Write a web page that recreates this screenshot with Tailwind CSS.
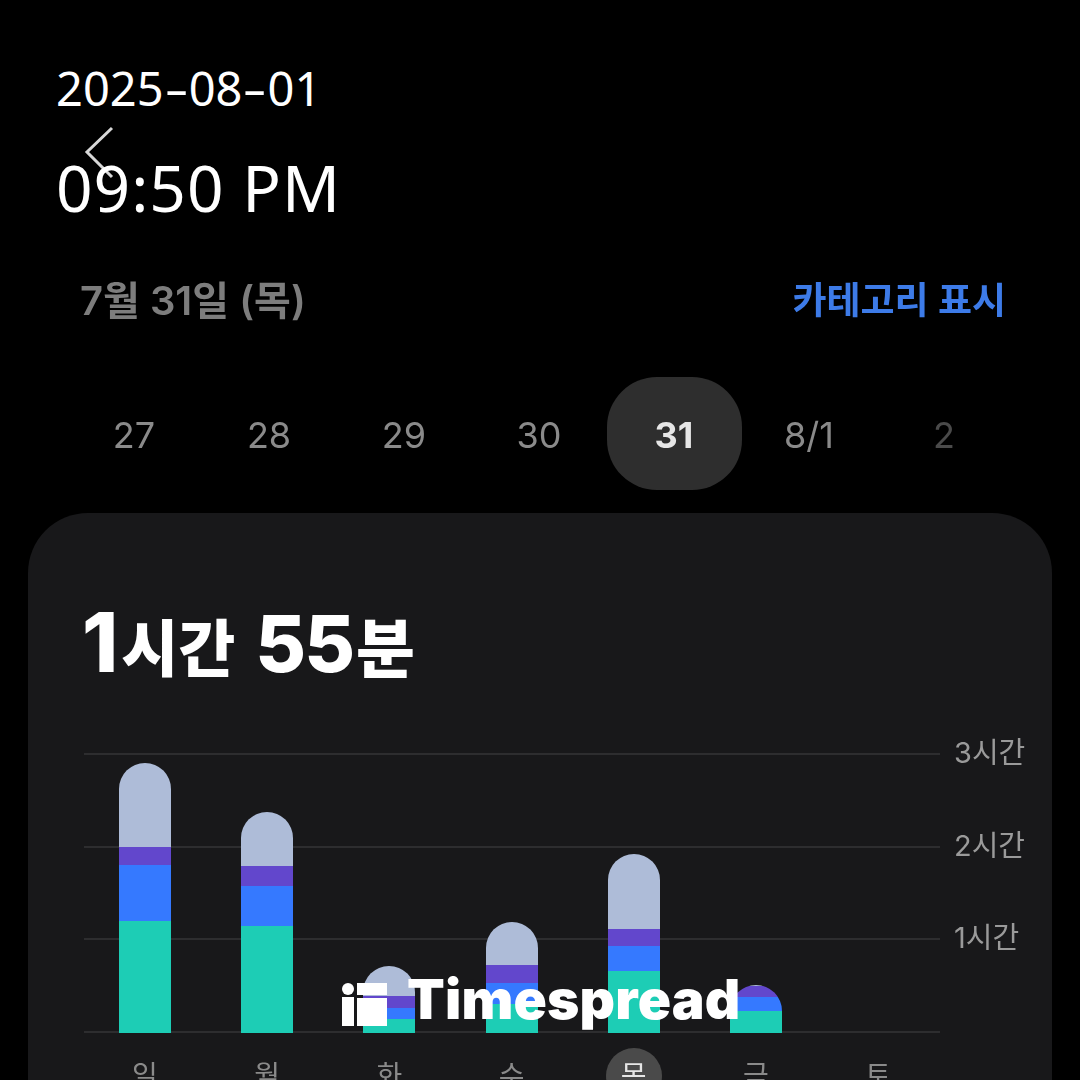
<!DOCTYPE html>
<html lang="ko">
<head>
  <meta charset="UTF-8">
  <meta name="viewport" content="width=device-width, initial-scale=1.0">
  <title>Timespread</title>
  <script src="https://cdn.jsdelivr.net/npm/@tailwindcss/browser@4"></script>
</head>
<body class="bg-black">
  <div class="relative w-[1080px] h-[1080px] overflow-hidden bg-black font-['Inter','Noto_Sans_CJK_KR',sans-serif]">

    <!-- App screenshot -->
    <div class="flex flex-col h-full blur-[0.6px]">
      <!-- Back button -->
      <div class="h-[260px] pl-[84px] pt-[126px] shrink-0">
        <svg class="w-[30px] h-[54px]" viewBox="0 0 30 54" fill="none" stroke="#d8d8d8" stroke-width="3">
          <path d="M28 2 L3 26 L28 51"/>
        </svg>
      </div>

      <!-- Date + category toggle -->
      <div class="flex items-center justify-between pl-[80px] pr-[74px] pt-[2px] h-[80px] shrink-0">
        <span class="text-[40px] font-semibold text-[#7d7d7d]">7월 31일 (목)</span>
        <span class="text-[37px] font-semibold text-[#3d7be8]">카테고리 표시</span>
      </div>

      <!-- Day picker -->
      <div class="flex pl-[66.5px] mt-[37px] h-[113px] shrink-0 text-[36px] text-[#8a8a8a]">
        <div class="w-[135px] flex items-center justify-center pt-[2px]">27</div>
        <div class="w-[135px] flex items-center justify-center pt-[2px]">28</div>
        <div class="w-[135px] flex items-center justify-center pt-[2px]">29</div>
        <div class="w-[135px] flex items-center justify-center pt-[2px]">30</div>
        <div class="w-[135px] flex items-center justify-center pt-[2px] rounded-[50px] bg-[#2e2e2e] text-[#e6e6e6] font-bold">31</div>
        <div class="w-[135px] flex items-center justify-center pt-[2px]">8/1</div>
        <div class="w-[135px] flex items-center justify-center pt-[2px] text-[#4a4a4a]">2</div>
      </div>

      <!-- Card -->
      <div class="mx-[28px] mt-[23px] flex-1 rounded-t-[60px] bg-[#18181a] pl-[54px]">
        <div class="flex items-baseline pt-[83px] h-[240px] text-white font-extrabold">
          <span class="text-[82px] leading-[94px] mr-[3px]">1</span>
          <span class="text-[62px] leading-[94px] mr-[20px]">시간</span>
          <span class="text-[78px] leading-[94px] mr-[3px] tracking-[-2px]">55</span>
          <span class="text-[64px] leading-[94px]">분</span>
        </div>

        <!-- Chart -->
        <div class="relative w-[940px] -ml-[2px]">
          <!-- Grid lines and hour labels -->
          <div class="absolute left-[4px] top-0 w-[960px] h-[280px] flex flex-col text-[29px] text-[#9a9a9a] whitespace-nowrap">
            <div class="h-[92.5px] flex items-start">
              <div class="w-[856px] h-[2px] bg-[#2d2d2f]"></div>
              <span class="ml-[14px] -mt-[20px] leading-[40px]">3시간</span>
            </div>
            <div class="h-[92.5px] flex items-start">
              <div class="w-[856px] h-[2px] bg-[#2d2d2f]"></div>
              <span class="ml-[14px] -mt-[20px] leading-[40px]">2시간</span>
            </div>
            <div class="h-[92.5px] flex items-start">
              <div class="w-[856px] h-[2px] bg-[#2d2d2f]"></div>
              <span class="ml-[14px] -mt-[20px] leading-[40px]">1시간</span>
            </div>
            <div class="w-[856px] h-[2px] bg-[#2d2d2f]"></div>
          </div>

          <!-- Bars -->
          <div class="relative flex items-end gap-[70.2px] pl-[39px] h-[280px]">
            <div class="w-[52px] flex flex-col">
              <div class="h-[84px] rounded-t-[26px] bg-[#aebcd8]"></div>
              <div class="h-[18px] bg-[#6247cc]"></div>
              <div class="h-[56px] bg-[#3579ff]"></div>
              <div class="h-[112px] bg-[#1dcdb5]"></div>
            </div>
            <div class="w-[52px] flex flex-col">
              <div class="h-[54px] rounded-t-[26px] bg-[#aebcd8]"></div>
              <div class="h-[20px] bg-[#6247cc]"></div>
              <div class="h-[40px] bg-[#3579ff]"></div>
              <div class="h-[107px] bg-[#1dcdb5]"></div>
            </div>
            <div class="w-[52px] flex flex-col">
              <div class="h-[30px] rounded-t-[26px] bg-[#aebcd8]"></div>
              <div class="h-[12px] bg-[#6247cc]"></div>
              <div class="h-[11px] bg-[#3579ff]"></div>
              <div class="h-[14px] bg-[#1dcdb5]"></div>
            </div>
            <div class="w-[52px] flex flex-col">
              <div class="h-[43px] rounded-t-[26px] bg-[#aebcd8]"></div>
              <div class="h-[18px] bg-[#6247cc]"></div>
              <div class="h-[21px] bg-[#3579ff]"></div>
              <div class="h-[29px] bg-[#1dcdb5]"></div>
            </div>
            <div class="w-[52px] flex flex-col">
              <div class="h-[75px] rounded-t-[26px] bg-[#aebcd8]"></div>
              <div class="h-[17px] bg-[#6247cc]"></div>
              <div class="h-[25px] bg-[#3579ff]"></div>
              <div class="h-[62px] bg-[#1dcdb5]"></div>
            </div>
            <div class="w-[52px] h-[48px] flex flex-col overflow-hidden rounded-t-[26px]">
              <div class="h-[1px] bg-[#aebcd8]"></div>
              <div class="h-[11px] bg-[#6247cc]"></div>
              <div class="h-[14px] bg-[#3579ff]"></div>
              <div class="h-[22px] bg-[#1dcdb5]"></div>
            </div>
          </div>

          <!-- Weekdays -->
          <div class="flex gap-[66.2px] pl-[37px] mt-[15px] text-[28px] text-[#8a8a8a]">
            <div class="w-[56px] h-[56px] flex items-center justify-center">일</div>
            <div class="w-[56px] h-[56px] flex items-center justify-center">월</div>
            <div class="w-[56px] h-[56px] flex items-center justify-center">화</div>
            <div class="w-[56px] h-[56px] flex items-center justify-center">수</div>
            <div class="w-[56px] h-[56px] flex items-center justify-center rounded-full bg-[#4a4a4a] text-[#e6e6e6]">목</div>
            <div class="w-[56px] h-[56px] flex items-center justify-center">금</div>
            <div class="w-[56px] h-[56px] flex items-center justify-center">토</div>
          </div>
        </div>
      </div>
    </div>

    <!-- Timestamp overlay -->
    <div class="absolute left-[56px] top-[58px] text-white font-['Noto_Sans',sans-serif]">
      <div class="text-[47px] leading-[60px]">2025<span class="inline-block mx-[5px] scale-x-[1.6]">-</span>08<span class="inline-block mx-[5px] scale-x-[1.6]">-</span>01</div>
      <div class="text-[64px] leading-[80px] mt-[30px] tracking-[1px]">09:50 PM</div>
    </div>

    <!-- Watermark -->
    <div class="absolute left-[342px] top-[969px] flex items-center text-white">
      <svg class="w-[45px] h-[43px] mt-[10px]" viewBox="0 0 45 43" fill="#fff">
        <circle cx="6" cy="6" r="6"/>
        <rect x="0" y="14" width="12" height="29"/>
        <rect x="15" y="0" width="30" height="12"/>
        <rect x="15" y="15" width="30" height="28"/>
      </svg>
      <span class="ml-[20px] text-[55px] leading-[60px] font-black tracking-[0.2px]">Timespread</span>
    </div>
  </div>
</body>
</html>
